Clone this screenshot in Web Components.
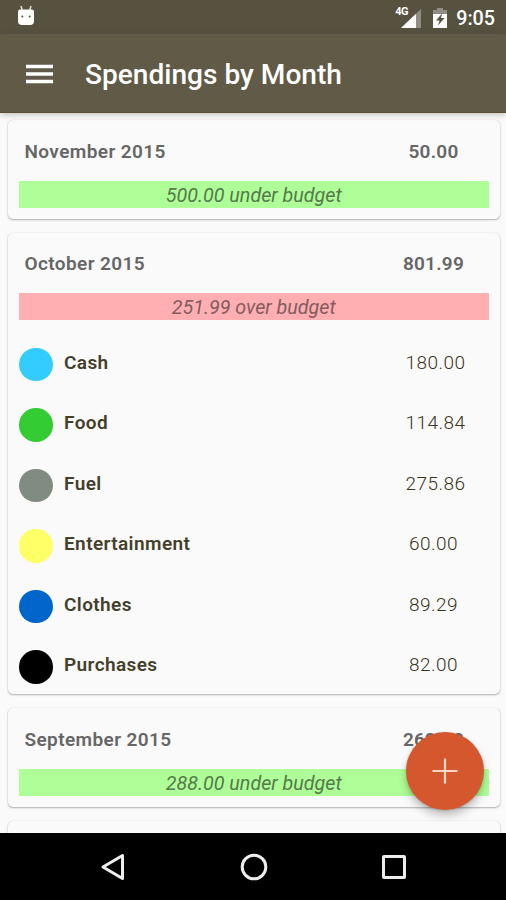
<!DOCTYPE html>
<html lang="en">
<head>
<meta charset="utf-8">
<title>Spendings by Month</title>
<style>
  body {
    margin: 0;
    font-family: Roboto, "Liberation Sans", sans-serif;
    background: #fafafa;
  }
</style>
</head>
<body>
<spendings-app></spendings-app>

<script>
(function () {

    function define(name, html) {
        const template = document.createElement('template');
        template.innerHTML = html;

        window.customElements.define(name, class extends HTMLElement {
            constructor() {
                super();
                this.attachShadow({mode: 'open'});
                this.shadowRoot.appendChild(template.content.cloneNode(true));
            }
        });
    }

    define('status-bar', `
    <style>
      :host {
        display: flex;
        align-items: center;
        box-sizing: border-box;
        height: 34px;
        padding: 0 11px 0 17px;
        background: #575140;
        color: #fff;
      }
      svg { display: block; flex: none; }
      .robot { margin: 0 auto 3px 0; }
      .network { position: relative; width: 27px; height: 22px; margin-right: 11px; }
      .network svg { position: absolute; right: 1px; bottom: 0; }
      .network span {
        position: absolute;
        left: 0;
        top: -1px;
        font-size: 11px;
        font-weight: 700;
        line-height: 13px;
        letter-spacing: -.6px;
      }
      .battery { margin-top: 1px; }
      .time { margin-left: 9px; font-size: 19.7px; font-weight: 500; line-height: 24px; padding-top: 3px; }
    </style>
    <svg class="robot" width="18" height="21" viewBox="0 0 18 21">
      <path d="M4 1l1.200 4M14 1l-1.200 4" stroke="#ddd9cf" stroke-width="1.6"/>
      <path d="M1 6.500Q1 4.500 3 4.500H15Q17 4.500 17 6.500V16Q17 20 13 20H5Q1 20 1 16Z" fill="#fff"/>
      <circle cx="5.300" cy="11.500" r="1" fill="#575140"/>
      <circle cx="12.700" cy="11.500" r="1" fill="#575140"/>
    </svg>
    <div class="network">
      <span>4G</span>
      <svg width="20" height="19" viewBox="0 0 20 19">
        <path d="M20 0V19H0Z" fill="#fff" fill-opacity=".35"/>
        <path d="M15 4.750V19H0Z" fill="#fff"/>
      </svg>
    </div>
    <svg class="battery" width="14" height="20" viewBox="0 0 14 20">
      <path d="M4 0h6v2h4v4H0V2h4Z" fill="#fff" fill-opacity=".35"/>
      <path d="M0 6H14V20H0Z" fill="#fff"/>
      <path d="M9.500 5L3 12.500H6.500L5 17.500L11.500 10H7.800Z" fill="#575140"/>
    </svg>
    <span class="time"><slot></slot></span>
  `);

    define('app-bar', `
    <style>
      :host {
        display: flex;
        align-items: center;
        box-sizing: border-box;
        height: 79px;
        padding: 2px 26px 0;
        background: #605a46;
        border-bottom: 1px solid #55502c;
        box-shadow: 0 2px 6px rgba(0, 0, 0, .22);
        color: #fff;
        position: relative;
        z-index: 1;
      }
      svg { display: block; margin: -1px 32px 0 0; }
      h1 { margin: 2px 0 0; font-size: 28.1px; font-weight: 500; line-height: 34px; }
    </style>
    <svg width="27" height="20" viewBox="0 0 27 20">
      <path d="M0 2.500H27M0 10H27M0 17.500H27" stroke="#fff" stroke-width="3.400"/>
    </svg>
    <h1><slot></slot></h1>
  `);

    define('month-card', `
    <style>
      :host {
        display: block;
        box-sizing: border-box;
        height: var(--card-height, 98.500px);
        padding: 0 11.500px;
        border-radius: 5px;
        background: #fafafa;
        box-shadow: 0 1px 2px rgba(0, 0, 0, .3), 0 0 1px rgba(0, 0, 0, .16);
      }
      header {
        display: grid;
        grid-template-columns: 1fr 110px;
        align-items: center;
        box-sizing: border-box;
        height: 60.500px;
        padding: 1.500px 0 0 5.500px;
        color: #666;
        font-size: 19px;
        font-weight: 600;
        letter-spacing: .4px;
      }
      .total { text-align: center; letter-spacing: .25px; }
      .band {
        height: 27px;
        line-height: 29.500px;
        text-align: center;
        font-size: 19.700px;
        font-style: italic;
        background: #afff98;
        color: #56794b;
      }
      :host([over]) .band { background: #ffafb2; color: #835c5e; }
      .rows { padding-top: 14px; }
    </style>
    <header><slot name="month"></slot><span class="total"><slot name="total"></slot></span></header>
    <div class="band"><slot name="budget"></slot></div>
    <div class="rows"><slot></slot></div>
  `);

    define('category-row', `
    <style>
      :host {
        display: grid;
        grid-template-columns: 33.500px 1fr 110px;
        align-items: center;
        height: 60.500px;
        color: #443f2a;
        font-size: 19px;
      }
      i { width: 33.500px; height: 33.500px; border-radius: 50%; background: var(--dot); }
      .name, .amount { padding-bottom: 4.500px; }
      .name { padding-left: 11.500px; font-weight: 600; letter-spacing: .4px; }
      .amount { text-align: center; font-weight: 300; letter-spacing: .5px; color: #38331c; }
      :host([wide]) .amount { padding-left: 4px; }
    </style>
    <i></i>
    <span class="name"><slot></slot></span>
    <span class="amount"><slot name="amount"></slot></span>
  `);

    define('add-button', `
    <style>
      :host {
        display: flex;
        align-items: center;
        justify-content: center;
        width: 78px;
        height: 78px;
        border-radius: 50%;
        background: #d5572e;
        box-shadow: 0 6px 9px rgba(0, 0, 0, .22), 0 1px 3px rgba(0, 0, 0, .15);
      }
    </style>
    <svg width="26" height="26" viewBox="0 0 26 26">
      <path d="M13 .500V25.500M.500 13H25.500" stroke="#ffd9c6" stroke-width="2.200"/>
    </svg>
  `);

    define('nav-bar', `
    <style>
      :host {
        display: flex;
        align-items: center;
        justify-content: center;
        gap: 112.500px;
        height: 67px;
        padding-left: 1px;
        background: #000;
      }
      svg { display: block; }
    </style>
    <svg width="28" height="30" viewBox="0 0 28 30">
      <path d="M23.500 3.500V26.500L4 15Z" fill="none" stroke="#eee" stroke-width="3" stroke-linejoin="round"/>
    </svg>
    <svg width="28" height="28" viewBox="0 0 28 28">
      <circle cx="14" cy="14" r="11.800" fill="none" stroke="#eee" stroke-width="3"/>
    </svg>
    <svg width="28" height="28" viewBox="0 0 28 28">
      <rect x="3.500" y="3.500" width="21" height="21" rx=".5" fill="none" stroke="#eee" stroke-width="3"/>
    </svg>
  `);

    define('spendings-app', `
    <style>
      :host { display: flex; flex-direction: column; height: 900px; overflow: hidden; }
      main { flex: 1; min-height: 0; overflow: hidden; position: relative; }
      .list { display: flex; flex-direction: column; gap: 14px; padding: 7px 6px 0 7.500px; }
      month-card { flex: none; }
      add-button { position: absolute; right: 22.500px; bottom: 23.500px; }
    </style>
    <status-bar>9:05</status-bar>
    <app-bar>Spendings by Month</app-bar>
    <main>
      <div class="list">
        <month-card>
          <span slot="month">November 2015</span>
          <span slot="total">50.00</span>
          <span slot="budget">500.00 under budget</span>
        </month-card>
        <month-card over style="--card-height: 461.500px">
          <span slot="month">October 2015</span>
          <span slot="total">801.99</span>
          <span slot="budget">251.99 over budget</span>
          <category-row wide style="--dot: #33ccff">Cash<span slot="amount">180.00</span></category-row>
          <category-row wide style="--dot: #33cc33">Food<span slot="amount">114.84</span></category-row>
          <category-row wide style="--dot: #808c82">Fuel<span slot="amount">275.86</span></category-row>
          <category-row style="--dot: #ffff66">Entertainment<span slot="amount">60.00</span></category-row>
          <category-row style="--dot: #0066cc">Clothes<span slot="amount">89.29</span></category-row>
          <category-row style="--dot: #000000">Purchases<span slot="amount">82.00</span></category-row>
        </month-card>
        <month-card>
          <span slot="month">September 2015</span>
          <span slot="total">262.00</span>
          <span slot="budget">288.00 under budget</span>
        </month-card>
        <month-card></month-card>
      </div>
      <add-button></add-button>
    </main>
    <nav-bar></nav-bar>
  `);
})();
</script>
</body>
</html>
